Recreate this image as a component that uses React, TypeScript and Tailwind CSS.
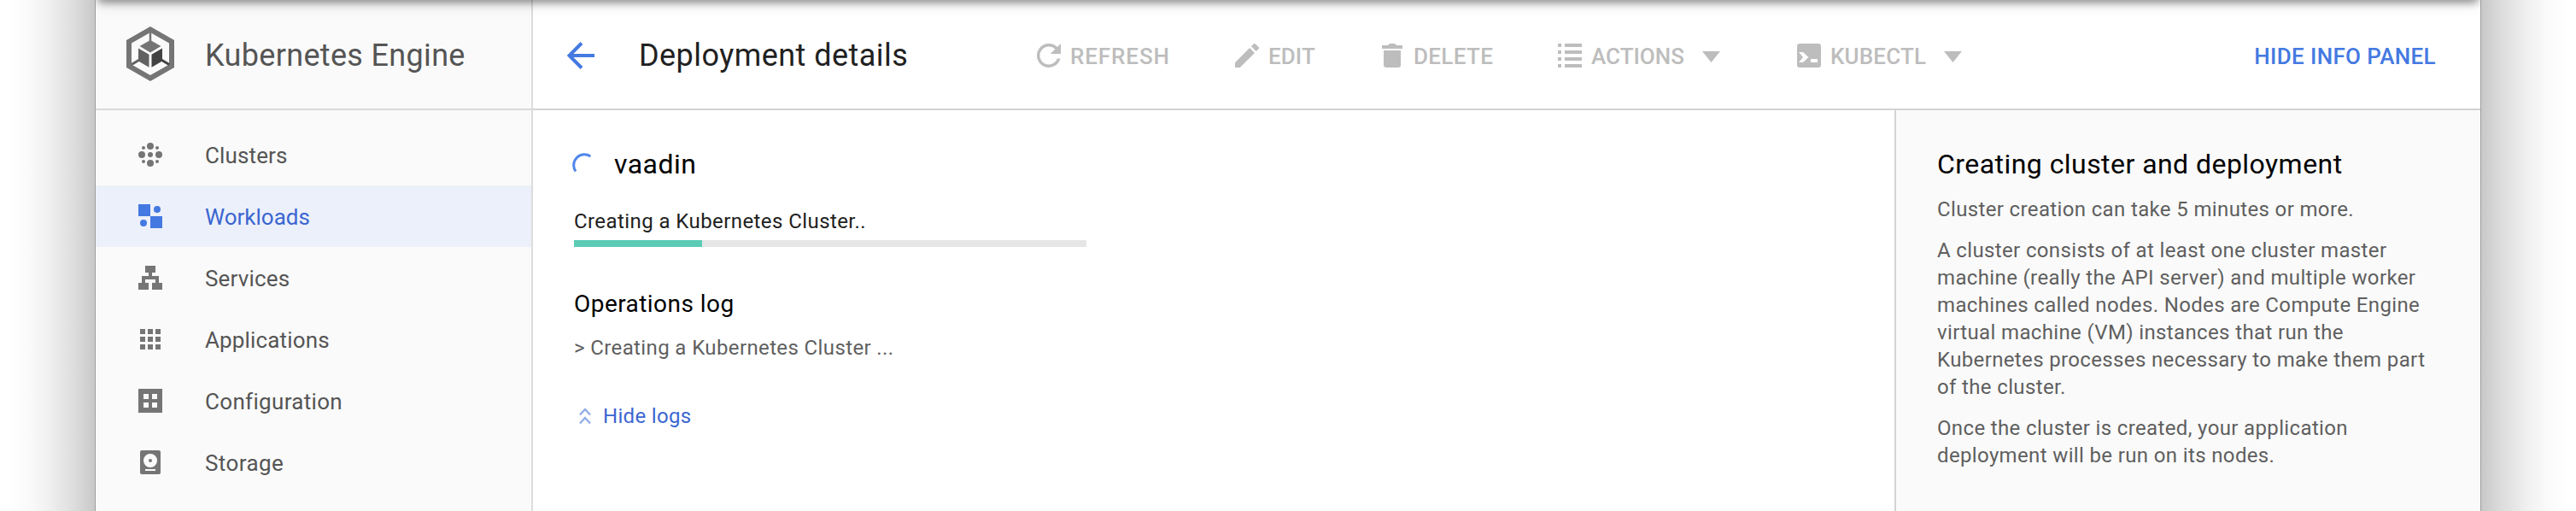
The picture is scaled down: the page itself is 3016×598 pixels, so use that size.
import type { ReactNode } from "react";

const NAV: { label: string; tracking: string; active?: boolean; icon: ReactNode }[] = [
  {
    label: "Clusters",
    tracking: "tracking-[0.13px]",
    icon: (
      <>
        <circle cx="14" cy="4" r="4" />
        <circle cx="14" cy="24" r="4" />
        <circle cx="4" cy="14" r="4" />
        <circle cx="24" cy="14" r="4" />
        <circle cx="14" cy="14" r="3" />
        <circle cx="6" cy="6" r="2" />
        <circle cx="22" cy="6" r="2" />
        <circle cx="6" cy="22" r="2" />
        <circle cx="22" cy="22" r="2" />
      </>
    ),
  },
  {
    label: "Workloads",
    tracking: "tracking-normal",
    active: true,
    icon: (
      <>
        <path d="M0 0h14v14H0zM14 14h14v14H14z" />
        <circle cx="22" cy="6" r="4" />
        <circle cx="6" cy="22" r="4" />
      </>
    ),
  },
  {
    label: "Services",
    tracking: "tracking-[0.17px]",
    icon: <path d="M8 0h12v8h-4v4h8v8h4v8H16v-8h4v-4H8v4h4v8H0v-8h4v-8h8V8H8z" />,
  },
  {
    label: "Applications",
    tracking: "tracking-[0.15px]",
    icon: (
      <path d="M2 2h6v6H2zM11 2h6v6h-6zM20 2h6v6h-6zM2 11h6v6H2zM11 11h6v6h-6zM20 11h6v6h-6zM2 20h6v6H2zM11 20h6v6h-6zM20 20h6v6h-6z" />
    ),
  },
  {
    label: "Configuration",
    tracking: "tracking-[0.32px]",
    icon: (
      <path
        fillRule="evenodd"
        d="M0 0h28v28H0zM6 6v6h6V6zM16 6v6h6V6zM6 16v6h6v-6zM16 16v6h6v-6z"
      />
    ),
  },
  {
    label: "Storage",
    tracking: "tracking-[0.4px]",
    icon: (
      <path
        fillRule="evenodd"
        d="M4 0h20a2 2 0 0 1 2 2v24a2 2 0 0 1-2 2H4a2 2 0 0 1-2-2V2a2 2 0 0 1 2-2zM14 4a8 8 0 1 0 0 16a8 8 0 1 0 0-16zM14 10a2 2 0 1 1 0 4a2 2 0 1 1 0-4zM8 22v2h12v-2z"
      />
    ),
  },
];

function Logo() {
  return (
    <svg className="mb-1 h-16 w-14 shrink-0" viewBox="0 0 56 64">
      <path
        fill="#757575"
        fillRule="evenodd"
        d="M28 0L56 16v32L28 64L0 48V16zM28 7L6 19.500v25L28 57l22-12.500v-25z"
      />
      <path stroke="#757575" strokeWidth="2.500" d="M28 6v12" />
      <path stroke="#616161" strokeWidth="3" d="M16 38.500L6 44.500" />
      <path stroke="#424242" strokeWidth="3" d="M40 38.500l10 6" />
      <path fill="#757575" d="M28 16l12.500 7L28 30.500L15.500 23z" />
      <path fill="#616161" d="M14 25.500l12.500 7.300v15L14 40.500z" />
      <path fill="#424242" d="M42 25.500L29.500 32.800v15L42 40.500z" />
    </svg>
  );
}

function Caret() {
  return (
    <svg className="mt-[3px] ml-[21px] h-[13px] w-[21px]" viewBox="0 0 21 13" fill="currentColor">
      <path d="M0 0h21L10.500 13z" />
    </svg>
  );
}

function Action({ icon, label, caret, className }: { icon: ReactNode; label: string; caret?: boolean; className: string }) {
  return (
    <div className={"flex shrink-0 items-center text-[26px] leading-8 font-medium text-[#bdbdbd] " + className}>
      <svg className="h-7 w-7 shrink-0" viewBox="0 0 28 28" fill="currentColor">
        {icon}
      </svg>
      <span className="mt-[2px] ml-[11px]">{label}</span>
      {caret && <Caret />}
    </div>
  );
}

export default function App() {
  return (
    <div className="flex h-[598px] w-[3016px] overflow-hidden bg-white font-[Roboto,sans-serif]">
      <div className="w-28 shrink-0 border-r border-[#9c9c9c] bg-[linear-gradient(to_left,#c8c8c8,#dddddd_22%,#f1f1f1_50%,#fbfbfb_72%,#ffffff_92%)]" />
      <div className="relative flex w-[2792px] shrink-0 overflow-hidden">
        <div className="absolute inset-x-[3px] -top-5 h-5 shadow-[0_3px_10px_rgba(0,0,0,0.4),0_2px_20px_rgba(0,0,0,0.14)]" />
        <aside className="flex w-[512px] shrink-0 flex-col border-r-2 border-[#dcdcdc] bg-[#fafafa]">
          <div className="flex h-[129px] items-center border-b-2 border-[#d9d9d9] pt-[3px] pl-9">
            <Logo />
            <span className="ml-9 text-[36px] leading-10 tracking-[0.33px] text-[#555]">Kubernetes Engine</span>
          </div>
          <nav className="flex flex-col pt-4">
            {NAV.map((item) => (
              <div
                key={item.label}
                className={
                  item.active
                    ? "flex h-[72px] items-center bg-[#ecf0fa] pl-[50px] text-[#3b66d1]"
                    : "flex h-[72px] items-center pl-[50px] text-[#555]"
                }
              >
                <svg
                  className={item.active ? "h-7 w-7 text-[#4479e1]" : "h-7 w-7 text-[#757575]"}
                  viewBox="0 0 28 28"
                  fill="currentColor"
                >
                  {item.icon}
                </svg>
                <span className={"mt-[2px] ml-[50px] text-[26px] leading-8 " + item.tracking}>{item.label}</span>
              </div>
            ))}
          </nav>
        </aside>
        <div className="flex grow flex-col">
          <header className="flex h-[129px] shrink-0 items-center border-b-2 border-[#d3d3d3] pt-[3px] text-[#212121]">
            <svg className="ml-10 h-8 w-8 shrink-0" viewBox="0 0 32 32" fill="none" stroke="#4479e1" strokeWidth="4">
              <path d="M32 16H3M17 1.500L2.500 16L17 30.500" />
            </svg>
            <h1 className="ml-[52px] w-[466px] shrink-0 text-[36px] leading-10 tracking-[0.45px]">Deployment details</h1>
            <Action
              className="w-[232px] tracking-[0.9px]"
              label="REFRESH"
              icon={<path d="M23.900 4.100A14 14 0 1 0 27.500 17.500h-3.700A10.500 10.500 0 1 1 21.400 6.600L15.800 12H28V0z" />}
            />
            <Action
              className="w-[170px] tracking-[0.1px]"
              label="EDIT"
              icon={<path d="M0 22.200V28h5.800L23 10.900L17.100 5zM27.500 6.300a1.600 1.600 0 0 0 0-2.200L23.900.5a1.600 1.600 0 0 0-2.200 0L18.900 3.300L24.700 9.100z" />}
            />
            <Action
              className="w-[208px] tracking-[0.35px]"
              label="DELETE"
              icon={<path d="M4 8h20v17a3 3 0 0 1-3 3H7a3 3 0 0 1-3-3zM2 2h7l2-2h6l2 2h7v4H2z" />}
            />
            <Action
              className="w-[280px]"
              label="ACTIONS"
              caret
              icon={<path d="M0 0h4v4H0zM8 0h20v4H8zM0 8h4v4H0zM8 8h20v4H8zM0 16h4v4H0zM8 16h20v4H8zM0 24h4v4H0zM8 24h20v4H8z" />}
            />
            <Action
              className="tracking-[0.15px]"
              label="KUBECTL"
              caret
              icon={<path fillRule="evenodd" d="M3 0h22a3 3 0 0 1 3 3v22a3 3 0 0 1-3 3H3a3 3 0 0 1-3-3V3a3 3 0 0 1 3-3zM2 10l5 6l-5 6h5l6.500-6L7 10zM16 18v4h8v-4z" />}
            />
            <span className="mt-[2px] mr-[52px] ml-auto text-[26px] leading-8 font-medium tracking-[0.35px] text-[#4479e1]">
              HIDE INFO PANEL
            </span>
          </header>
          <div className="flex grow">
            <main className="flex grow flex-col items-start pt-[43px] pl-12">
              <div className="-ml-[2px] flex h-10 items-center">
                <svg className="mb-[2px] h-6 w-6" viewBox="0 0 24 24" fill="none" stroke="#4f86ec" strokeWidth="3">
                  <path d="M21.300 4A12.500 12.500 0 0 0 4 21.500" />
                </svg>
                <h2 className="ml-[25px] text-[32px] leading-10 tracking-[0.45px] text-black">vaadin</h2>
              </div>
              <p className="mt-[31px] text-[24px] leading-8 tracking-[0.42px] text-[#212121]">
                Creating a Kubernetes Cluster..
              </p>
              <div className="mt-[6px] h-2 w-[600px] bg-[#e6e6e6]">
                <div className="h-2 w-[150px] bg-[#5bcbb6]" />
              </div>
              <h3 className="mt-[51px] text-[28px] leading-8 tracking-[0.45px] text-black">Operations log</h3>
              <p className="mt-[19px] text-[24px] leading-8 tracking-[0.38px] text-[#5f5f5f]">
                &gt; Creating a Kubernetes Cluster ...
              </p>
              <div className="mt-12 flex h-8 items-center text-[24px] leading-8 tracking-[0.32px] text-[#3b66d1]">
                <svg className="ml-[6px] h-5 w-[14px]" viewBox="0 0 14 20" fill="none" stroke="#93afe9" strokeWidth="2.400">
                  <path d="M1 8.500l6-6.500l6 6.500M1 18.500l6-6.500l6 6.500" />
                </svg>
                <span className="ml-[14px]">Hide logs</span>
              </div>
            </main>
            <section className="w-[686px] shrink-0 border-l-2 border-[#d3d3d3] bg-[#fafafa] pt-[43px] pl-12 text-[24px] leading-8 tracking-[0.36px] text-[#5f5f5f]">
              <h2 className="text-[32px] leading-10 tracking-[0.45px] text-black">Creating cluster and deployment</h2>
              <p className="mt-[17px]">Cluster creation can take 5 minutes or more.</p>
              <p className="mt-4 w-[580px]">
                A cluster consists of at least one cluster master machine (really the API server) and multiple worker
                machines called nodes. Nodes are Compute Engine virtual machine (VM) instances that run the Kubernetes
                processes necessary to make them part of the cluster.
              </p>
              <p className="mt-4 w-[560px]">
                Once the cluster is created, your application deployment will be run on its nodes.
              </p>
            </section>
          </div>
        </div>
      </div>
      <div className="w-28 shrink-0 border-l border-[#9c9c9c] bg-[linear-gradient(to_right,#c8c8c8,#dddddd_22%,#f1f1f1_50%,#fbfbfb_72%,#ffffff_92%)]" />
    </div>
  );
}
